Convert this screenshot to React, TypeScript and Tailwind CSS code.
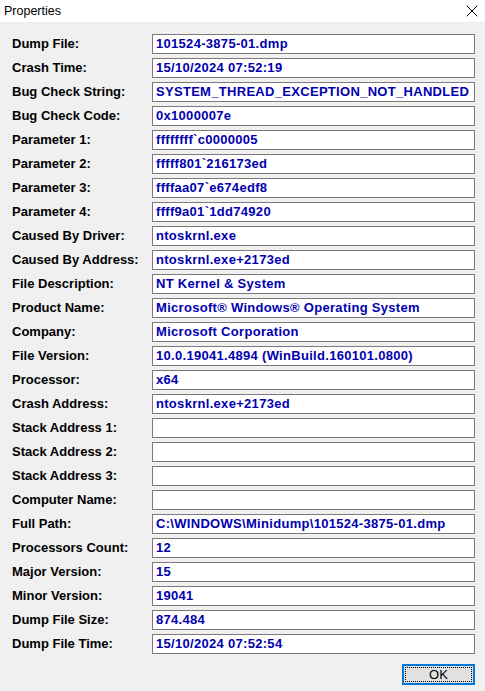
import { X } from "lucide-react";

const fields: [string, string][] = [
  ["Dump File:", "101524-3875-01.dmp"],
  ["Crash Time:", "15/10/2024 07:52:19"],
  ["Bug Check String:", "SYSTEM_THREAD_EXCEPTION_NOT_HANDLED"],
  ["Bug Check Code:", "0x1000007e"],
  ["Parameter 1:", "ffffffff`c0000005"],
  ["Parameter 2:", "fffff801`216173ed"],
  ["Parameter 3:", "ffffaa07`e674edf8"],
  ["Parameter 4:", "ffff9a01`1dd74920"],
  ["Caused By Driver:", "ntoskrnl.exe"],
  ["Caused By Address:", "ntoskrnl.exe+2173ed"],
  ["File Description:", "NT Kernel & System"],
  ["Product Name:", "Microsoft® Windows® Operating System"],
  ["Company:", "Microsoft Corporation"],
  ["File Version:", "10.0.19041.4894 (WinBuild.160101.0800)"],
  ["Processor:", "x64"],
  ["Crash Address:", "ntoskrnl.exe+2173ed"],
  ["Stack Address 1:", ""],
  ["Stack Address 2:", ""],
  ["Stack Address 3:", ""],
  ["Computer Name:", ""],
  ["Full Path:", "C:\\WINDOWS\\Minidump\\101524-3875-01.dmp"],
  ["Processors Count:", "12"],
  ["Major Version:", "15"],
  ["Minor Version:", "19041"],
  ["Dump File Size:", "874.484"],
  ["Dump File Time:", "15/10/2024 07:52:54"],
];

function FieldRow({ label, value }: { label: string; value: string }) {
  return (
    <div className="flex items-center h-[20px]">
      <span className="w-[152px] shrink-0 pl-[12px] text-[13px] font-bold text-black">{label}</span>
      <div className="w-[323px] h-[20px] bg-white border border-[#7a7a7a] pl-[3px] flex items-center overflow-hidden whitespace-nowrap text-[13px] font-bold tracking-[0.3px] text-[#0000b0]">
        {value}
      </div>
    </div>
  );
}

export default function App() {
  return (
    <div className="w-[485px] h-[691px] bg-[#f0f0f0] flex flex-col font-['Liberation_Sans',Arial,sans-serif] select-none">
      <div className="h-[22px] bg-white flex items-center justify-between pl-[4px] pr-[3px]">
        <span className="text-[12.5px] text-black">Properties</span>
        <X className="w-[20px] h-[20px] text-black" strokeWidth={1.2} />
      </div>
      <div className="flex flex-col gap-[4px] pt-[12px]">
        {fields.map(([label, value]) => (
          <FieldRow key={label} label={label} value={value} />
        ))}
      </div>
      <div className="flex justify-end pr-[10px] pt-[10px]">
        <button className="w-[73px] h-[21px] bg-[#e1e1e1] border-2 border-[#0078d7] p-px flex">
          <span className="flex-1 flex items-center justify-center border border-dotted border-black text-[13px] text-black">
            OK
          </span>
        </button>
      </div>
    </div>
  );
}
